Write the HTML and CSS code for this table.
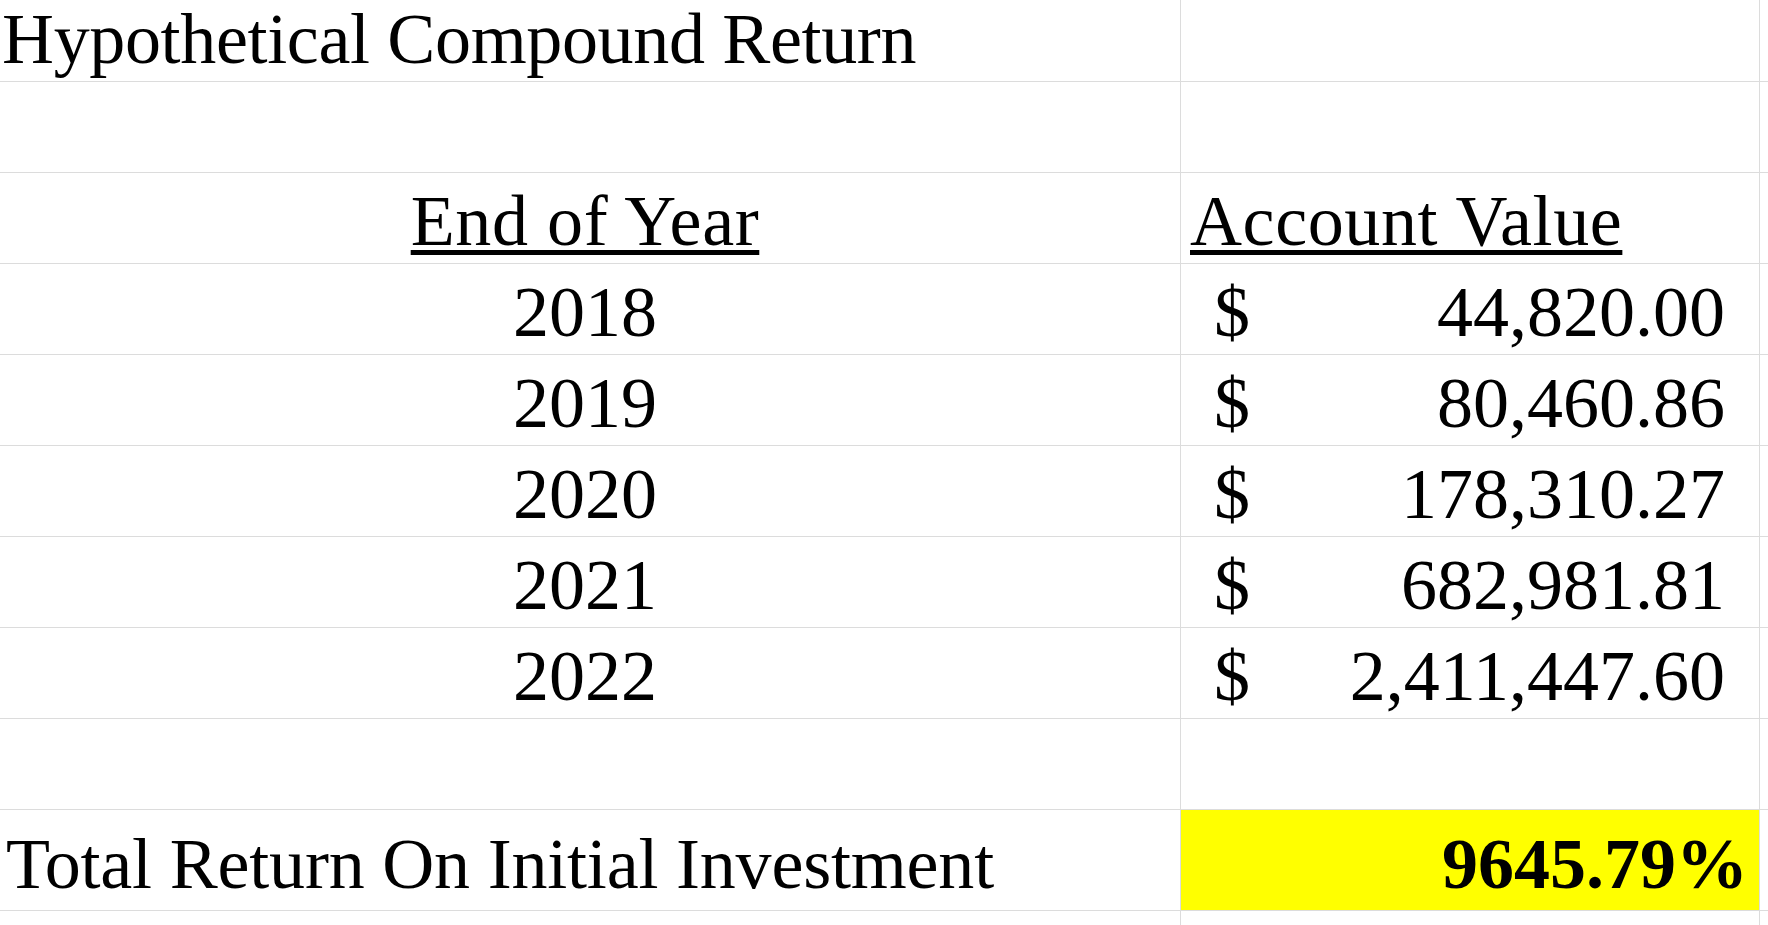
FILE: index.html
```html
<!DOCTYPE html>
<html lang="en">
<head>
<meta charset="utf-8">
<title>Hypothetical Compound Return</title>
<link rel="stylesheet" href="styles.css">
</head>
<body>
<div class="sheet">
  <div class="cell a title">Hypothetical Compound Return</div>
  <div class="cell b"></div>
  <div class="cell c"></div>

  <div class="cell a"></div>
  <div class="cell b"></div>
  <div class="cell c"></div>

  <div class="cell a center"><span class="ul year-head">End of Year</span></div>
  <div class="cell b head"><span class="ul">Account Value</span></div>
  <div class="cell c"></div>

  <div class="cell a center">2018</div>
  <div class="cell b money"><span>$</span><span>44,820.00</span></div>
  <div class="cell c"></div>

  <div class="cell a center">2019</div>
  <div class="cell b money"><span>$</span><span>80,460.86</span></div>
  <div class="cell c"></div>

  <div class="cell a center">2020</div>
  <div class="cell b money"><span>$</span><span>178,310.27</span></div>
  <div class="cell c"></div>

  <div class="cell a center">2021</div>
  <div class="cell b money"><span>$</span><span>682,981.81</span></div>
  <div class="cell c"></div>

  <div class="cell a center">2022</div>
  <div class="cell b money"><span>$</span><span>2,411,447.60</span></div>
  <div class="cell c"></div>

  <div class="cell a"></div>
  <div class="cell b"></div>
  <div class="cell c"></div>

  <div class="cell a total">Total Return On Initial Investment</div>
  <div class="cell b pct">9645.79%</div>
  <div class="cell c"></div>

  <div class="cell a"></div>
  <div class="cell b"></div>
  <div class="cell c"></div>
</div>
</body>
</html>
```

FILE: styles.css
```css
html, body {
  margin: 0;
  padding: 0;
  background: #ffffff;
}

body {
  font-family: "Liberation Serif", "Times New Roman", serif;
  color: #000000;
  overflow: hidden;
}

.sheet {
  display: grid;
  grid-template-columns: 1180px 580px 8px;
  grid-template-rows: 82px repeat(8, 91px) 101px 30px;
  width: 1768px;
}

.cell {
  box-sizing: border-box;
  border-bottom: 1px solid #dcdcdc;
  display: flex;
  align-items: flex-end;
  font-size: 72px;
  line-height: 72px;
  padding-bottom: 6px;
  white-space: nowrap;
}

.cell.b {
  border-left: 1px solid #dcdcdc;
  border-right: 1px solid #dcdcdc;
}

.title {
  padding-left: 2px;
  letter-spacing: -0.35px;
}

.center {
  justify-content: center;
  padding-right: 10px;
}

.ul {
  text-decoration: underline;
  text-decoration-thickness: 5px;
  text-underline-offset: 5px;
}

.year-head {
  letter-spacing: 0.6px;
}

.head {
  padding-left: 9px;
  letter-spacing: 0.6px;
}

.money {
  justify-content: space-between;
  padding-left: 33px;
  padding-right: 34px;
}

.total {
  padding-left: 6px;
  padding-bottom: 10px;
  letter-spacing: -0.2px;
}

.pct {
  background: #ffff00;
  justify-content: flex-end;
  font-weight: bold;
  padding-right: 11px;
  padding-bottom: 10px;
}
```
